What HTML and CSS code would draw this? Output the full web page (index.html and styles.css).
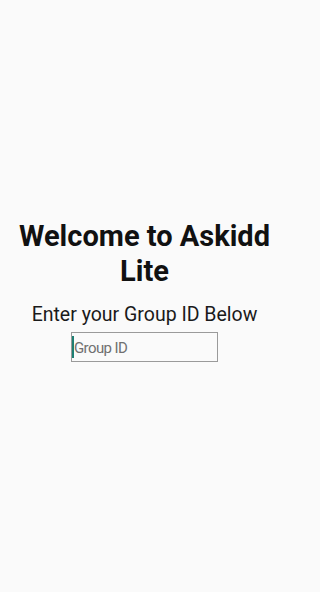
FILE: index.html
```html
<!DOCTYPE html>
<html>
<head>
<meta charset="utf-8">
<link rel="stylesheet" href="styles.css">
</head>
<body>
<main class="screen">
  <h1 class="title">Welcome to Askidd Lite</h1>
  <p class="subtitle">Enter your Group ID Below</p>
  <div class="field"><span class="caret"></span><span class="placeholder">Group ID</span></div>
</main>
</body>
</html>
```
FILE: styles.css
```css
html, body {
  margin: 0;
  padding: 0;
  background: #fafafa;
}
.screen {
  width: 289px;
  height: 592px;
  box-sizing: border-box;
  padding-top: 219px;
  display: flex;
  flex-direction: column;
  align-items: center;
  font-family: Roboto, "Noto Sans", sans-serif;
}
.title {
  margin: 0;
  width: 260px;
  text-align: center;
  font-size: 29px;
  line-height: 35px;
  font-weight: 700;
  color: #111;
}
.subtitle {
  margin: 14px 0 0;
  font-size: 19.5px;
  line-height: 24px;
  color: #1a1a1a;
}
.field {
  margin-top: 5px;
  width: 145px;
  height: 28px;
  border: 1px solid #9a9a9a;
  display: flex;
  align-items: center;
  box-sizing: content-box;
}
.caret {
  width: 2px;
  height: 22px;
  background: #1e7f73;
}
.placeholder {
  margin-top: 2px;
  font-size: 15px;
  letter-spacing: -0.6px;
  color: #707070;
}
```
